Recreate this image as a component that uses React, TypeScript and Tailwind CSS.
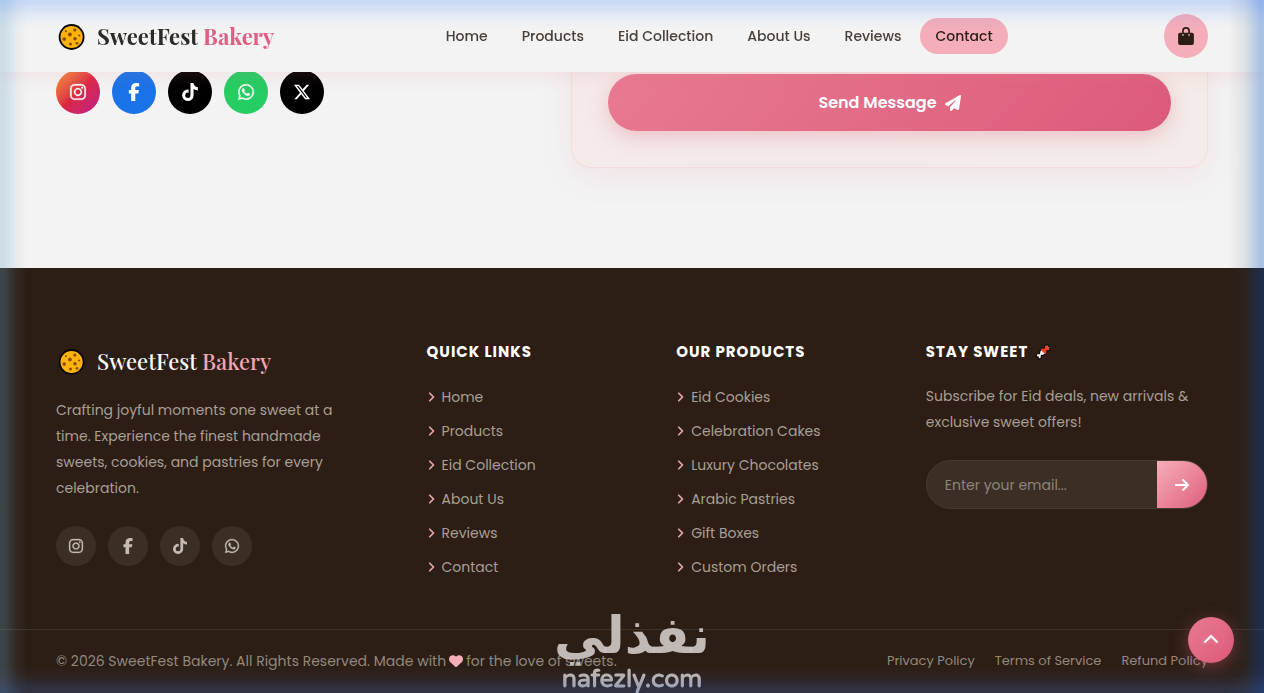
import React from 'react';
import {
  FaInstagram,
  FaFacebookF,
  FaTiktok,
  FaWhatsapp,
  FaXTwitter,
  FaPaperPlane,
  FaChevronRight,
  FaChevronUp,
  FaArrowRight,
  FaHeart,
} from 'react-icons/fa6';

const navLinks = ['Home', 'Products', 'Eid Collection', 'About Us', 'Reviews', 'Contact'];
const productLinks = [
  'Eid Cookies',
  'Celebration Cakes',
  'Luxury Chocolates',
  'Arabic Pastries',
  'Gift Boxes',
  'Custom Orders',
];
const legalLinks = ['Privacy Policy', 'Terms of Service', 'Refund Policy'];

const contactSocials = [
  { name: 'Instagram', Icon: FaInstagram, look: 'bg-linear-135 from-[#f09433] via-[#dc2743] to-[#bc1888]', weight: 'stroke-current stroke-[8]' },
  { name: 'Facebook', Icon: FaFacebookF, look: 'bg-[#1a73e8]', weight: '' },
  { name: 'TikTok', Icon: FaTiktok, look: 'bg-black', weight: '' },
  { name: 'WhatsApp', Icon: FaWhatsapp, look: 'bg-[#25cd62]', weight: 'stroke-current stroke-[8]' },
  { name: 'X', Icon: FaXTwitter, look: 'bg-black', weight: '' },
];

function Cookie() {
  return (
    <svg className="size-8 shrink-0" viewBox="0 0 32 32" aria-hidden="true">
      <circle cx="15.6" cy="17" r="12" fill="#fbb30c" stroke="#080604" strokeWidth="1.8" />
      <g fill="#8b4a10">
        <circle cx="13.9" cy="14.5" r="1.9" />
        <circle cx="18.8" cy="10.1" r="1.6" />
        <circle cx="8.2" cy="19.1" r="1.8" />
        <circle cx="19" cy="18.8" r="1.8" />
        <circle cx="14.5" cy="24" r="1.5" />
        <circle cx="21" cy="23.3" r="1.4" />
        <circle cx="9.9" cy="11.3" r="1" />
        <circle cx="23.2" cy="15.5" r="1" />
      </g>
    </svg>
  );
}

function Candy() {
  return (
    <svg className="size-4" viewBox="0 0 16 16" aria-hidden="true">
      <path
        d="M9.500 4.500 L10 1.500 L13 1 L13.500 2.500 L15 3 L14.500 6 L11.500 6.500 A4.500 4.500 0 0 1 6.500 11.500 L6 14.500 L3.500 15 L3 13 L1 12.500 L1.500 10 L4.500 9.500 A4.500 4.500 0 0 1 9.500 4.500Z"
        fill="#f0ebe9"
        stroke="#0c0808"
        strokeWidth="1.200"
      />
      <path d="M9.700 4.800 L10.500 2.100 L12.700 1.600 L13 3 L14.400 3.500 L13.900 5.500 L11.300 6.200 Q12 8.500 10.400 10.300 L5.500 5.800 Q7.400 4.100 9.700 4.800Z" fill="#ef3f22" />
    </svg>
  );
}

function Bag() {
  return (
    <svg className="h-[18px] w-4" viewBox="0 0 448 512" aria-hidden="true">
      <path d="M136 190V112a88 88 0 0 1 176 0v78" fill="none" stroke="currentColor" strokeWidth="48" />
      <rect y="160" width="448" height="352" rx="56" fill="currentColor" />
      <circle cx="136" cy="224" r="25" fill="#f4adb9" />
      <circle cx="312" cy="224" r="25" fill="#f4adb9" />
    </svg>
  );
}

function Brand({ dark }: { dark?: boolean }) {
  return (
    <a href="#home" className="flex items-center gap-[9px] font-['Playfair_Display','Liberation_Serif',serif] text-[22px] leading-[42px] whitespace-nowrap">
      <Cookie />
      <span className={dark ? 'font-medium text-white' : 'font-bold text-[#2b2b27]'}>
        SweetFest <span className={dark ? 'text-[#f4a7b3]' : 'text-[#df5f83]'}>Bakery</span>
      </span>
    </a>
  );
}

function Header() {
  return (
    <header className="fixed inset-x-0 top-0 z-20 flex h-18 items-center justify-between bg-[#f3f3f3] px-14 shadow-[0_4px_16px_rgba(232,118,140,0.14)]">
      <Brand />
      <nav aria-label="Main" className="flex items-center gap-1">
        {navLinks.map((label) => (
          <a
            key={label}
            href="#"
            className={
              label === 'Contact'
                ? 'rounded-full bg-[#f4adb9] px-[15px] text-sm leading-9 font-medium text-[#2c1e14]'
                : 'rounded-full px-[15px] text-sm leading-9 font-medium text-[#4a4038]'
            }
          >
            {label}
          </a>
        ))}
      </nav>
      <button type="button" aria-label="Cart" className="flex size-11 items-center justify-center rounded-full bg-[#f4adb9] text-[#2c1e14]">
        <Bag />
      </button>
    </header>
  );
}

function ContactSection() {
  return (
    <main className="grid grid-cols-[1fr_1.4fr] gap-15 bg-[#f3f3f3] px-14 pb-25">
      <div className="flex gap-3 pt-[70px]">
        {contactSocials.map(({ name, Icon, look, weight }) => (
          <a key={name} href="#" aria-label={name} className={`flex size-11 items-center justify-center rounded-full text-lg text-white ${look}`}>
            <Icon className={weight} />
          </a>
        ))}
      </div>
      <form className="rounded-b-[20px] border border-t-0 border-[#f3dcdc] bg-linear-135 from-[#f5eae8] to-[#f3ece8] px-9 pt-[74px] pb-9 shadow-[0_8px_32px_rgba(232,118,140,0.12)]">
        <button
          type="button"
          className="flex h-[57px] w-full items-center justify-center gap-2 rounded-full bg-linear-135 from-[#e87a91] to-[#dc5a7a] font-semibold text-white shadow-[0_6px_20px_rgba(222,95,125,0.3)]"
        >
          Send Message <FaPaperPlane />
        </button>
      </form>
    </main>
  );
}

function LinkColumn({ title, links }: { title: string; links: string[] }) {
  return (
    <div>
      <h2 className="text-[15px] leading-6 font-bold tracking-[1px] text-white uppercase">{title}</h2>
      <ul className="mt-[22px] flex flex-col gap-3">
        {links.map((label) => (
          <li key={label}>
            <a href="#" className="flex items-center gap-[7px] text-sm leading-[22px] text-[#a89f96]">
              <FaChevronRight className="h-[10px] w-2 stroke-current stroke-[16] text-[#f4adb9]" />
              {label}
            </a>
          </li>
        ))}
      </ul>
    </div>
  );
}

function Footer() {
  return (
    <footer className="bg-[#2c1e14] text-[#a89f96]">
      <div className="grid grid-cols-[minmax(0,1.6fr)_minmax(0,1fr)_minmax(0,1fr)_minmax(0,1.4fr)] gap-12 px-14 pt-18 pb-[51px]">
        <div>
          <Brand dark />
          <p className="mt-[15px] max-w-[300px] text-sm leading-[26px]">
            Crafting joyful moments one sweet at a time. Experience the finest handmade sweets, cookies, and pastries for every celebration.
          </p>
          <div className="mt-[25px] flex gap-3">
            {contactSocials.slice(0, 4).map(({ name, Icon, weight }) => (
              <a key={name} href="#" aria-label={name} className="flex size-10 items-center justify-center rounded-full bg-[#3b2f25] text-base text-[#c3bbb4]">
                <Icon className={weight} />
              </a>
            ))}
          </div>
        </div>
        <LinkColumn title="Quick Links" links={navLinks} />
        <LinkColumn title="Our Products" links={productLinks} />
        <div>
          <h2 className="flex items-center gap-[7px] text-[15px] leading-6 font-bold tracking-[1px] text-white uppercase">
            Stay Sweet <Candy />
          </h2>
          <p className="mt-[19px] text-sm leading-[26px]">
            Subscribe for Eid deals, new arrivals &amp; exclusive sweet offers!
          </p>
          <form className="mt-[25px] flex h-[49px] overflow-hidden rounded-full border border-[#453a30] bg-[#3b2f25]">
            <input
              type="email"
              aria-label="Email address"
              placeholder="Enter your email..."
              className="w-full min-w-0 flex-1 bg-transparent px-[18px] text-sm text-white outline-none placeholder:text-[#8d847b]"
            />
            <button type="button" aria-label="Subscribe" className="flex w-[50px] items-center justify-center bg-linear-135 from-[#f4adb9] to-[#de5c7d] text-base text-white">
              <FaArrowRight />
            </button>
          </form>
        </div>
      </div>
      <div className="flex h-16 items-center justify-between border-t border-[#3e3228] px-14 pb-0.5 text-[#91887f]">
        <p className="flex items-center gap-[3px] text-sm whitespace-nowrap">
          © 2026 SweetFest Bakery. All Rights Reserved. Made with <FaHeart className="text-[#f4adb9]" /> for the love of sweets.
        </p>
        <nav aria-label="Legal" className="flex gap-5 text-[13px] whitespace-nowrap">
          {legalLinks.map((label) => (
            <a key={label} href="#">
              {label}
            </a>
          ))}
        </nav>
      </div>
    </footer>
  );
}

function Watermark() {
  return (
    <div className="pointer-events-none fixed inset-x-0 bottom-0 z-30 flex flex-col items-center text-[#d0cac6]/90">
      <span lang="ar" dir="rtl" className="font-['DejaVu_Sans',sans-serif] text-[51px] leading-[58px] font-bold">
        نفذلي
      </span>
      <span className="font-['Varela_Round','Quicksand','Comfortaa','Poppins',sans-serif] text-[25px] leading-7 font-bold">nafezly.com</span>
    </div>
  );
}

function EdgeGlow() {
  return (
    <div aria-hidden="true" className="pointer-events-none fixed inset-0 z-40">
      <div className="absolute inset-y-0 left-0 w-7 bg-linear-to-r from-[#6ba5c8]/28 from-15% via-[#6ba5c8]/8 via-60% to-transparent" />
      <div className="absolute inset-y-0 right-0 w-9 bg-linear-to-l from-[#0050c8]/30 from-10% via-[#28506e]/10 via-55% to-transparent" />
      <div className="absolute inset-x-0 top-0 h-7 bg-linear-to-b from-[#3c82ff]/22 from-10% via-[#3c82ff]/7 via-60% to-transparent" />
      <div className="absolute inset-x-0 bottom-0 h-7 bg-linear-to-t from-[#3c64b4]/28 from-15% via-[#3c64b4]/8 via-60% to-transparent" />
    </div>
  );
}

export default function App() {
  return (
    <div className="font-['Poppins','Inter',sans-serif]">
      <Header />
      <ContactSection />
      <Footer />
      <button
        type="button"
        aria-label="Back to top"
        className="fixed right-[30px] bottom-[30px] z-20 flex size-[46px] items-center justify-center rounded-full bg-linear-135 from-[#e87a91] to-[#dc5a7a] text-base text-white shadow-[0_4px_18px_rgba(222,95,125,0.4)]"
      >
        <FaChevronUp className="stroke-current stroke-[10]" />
      </button>
      <Watermark />
      <EdgeGlow />
    </div>
  );
}
